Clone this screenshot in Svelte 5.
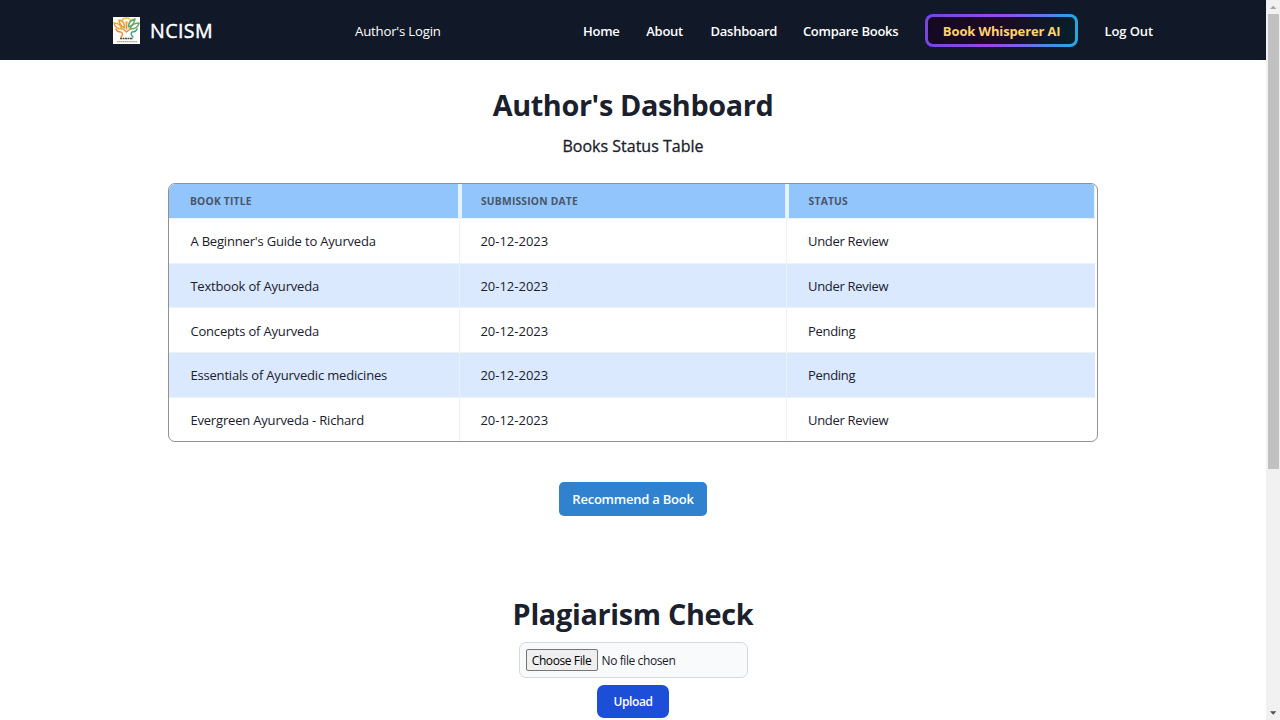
<script>
  const links = [
    { label: 'Home', width: 37 },
    { label: 'About', width: 38 },
    { label: 'Dashboard', width: 66 },
    { label: 'Compare Books', width: 96 }
  ];
  const books = [
    { title: "A Beginner's Guide to Ayurveda", date: '20-12-2023', status: 'Under Review' },
    { title: 'Textbook of Ayurveda', date: '20-12-2023', status: 'Under Review' },
    { title: 'Concepts of Ayurveda', date: '20-12-2023', status: 'Pending' },
    { title: 'Essentials of Ayurvedic medicines', date: '20-12-2023', status: 'Pending' },
    { title: 'Evergreen Ayurveda - Richard', date: '20-12-2023', status: 'Under Review' }
  ];
</script>

<div class="screen">
  <div class="page">
    <header>
      <div class="brand">
        <svg class="logo" viewBox="0 0 27 27" aria-hidden="true">
          <rect width="27" height="27" fill="#fbfcf5" />
          <g fill="none" stroke-width="1.5" stroke-linecap="round" stroke-linejoin="round">
            <path d="M8.5 4Q10 1 13.5 1Q17 1 18 4" stroke="#e8c84e" />
            <path d="M1 6Q7 6 9 12Q2 12 1 6ZM6 3Q12 4 11.5 11Q6 8 6 3Z" stroke="#e9a03c" />
            <path d="M26 6Q19 6 17 12Q25 12 26 6ZM22 2Q15 4 15.5 10Q21 8 22 2Z" stroke="#67a568" />
            <path d="M3 12Q4 15 8 15Q11 17 8 20" stroke="#e78c3c" />
            <path d="M24 12Q23 15 19 15Q17 17 20 20" stroke="#45a193" />
            <path d="M13.5 6V12M10 12L13.5 15L17 12" stroke="#d99542" />
          </g>
          <circle cx="13.5" cy="5.5" r="1.2" fill="#e4ae49" />
          <path d="M7 21.5H20" stroke="#544c42" stroke-width="1.3" stroke-dasharray="2 .5" />
          <path d="M4 24.7H24" stroke="#a6a8a1" stroke-width="1.2" stroke-dasharray="1.5 .4" />
        </svg>
        <span class="name">NCISM</span>
      </div>
      <span class="role">Author's Login</span>
      <nav>
        {#each links as link}
          <a style:width="{link.width}px" href="#top">{link.label}</a>
        {/each}
        <button class="whisper"><span>Book Whisperer AI</span></button>
        <a class="logout" href="#top">Log Out</a>
      </nav>
    </header>

    <main>
      <h1>Author's Dashboard</h1>
      <h2>Books Status Table</h2>
      <div class="table">
        <div class="row head">
          <div>BOOK TITLE</div>
          <div>SUBMISSION DATE</div>
          <div>STATUS</div>
        </div>
        {#each books as book}
          <div class="row">
            <div>{book.title}</div>
            <div class="date">{book.date}</div>
            <div class="status">{book.status}</div>
          </div>
        {/each}
      </div>
      <button class="recommend">Recommend a Book</button>
      <h1 class="check">Plagiarism Check</h1>
      <div class="file">
        <button>Choose File</button><span>No file chosen</span>
      </div>
      <button class="upload">Upload</button>
    </main>
  </div>
  <div class="scrollbar">
    <svg viewBox="0 0 14 14"><path d="M4 9L7.2 5.7L10.4 9Z" fill="#a3a3a3" /></svg>
    <div class="thumb"></div>
    <svg class="down" viewBox="0 0 14 14"><path d="M4 5.3H10.4L7.2 8.7Z" fill="#505050" /></svg>
  </div>
</div>

<style>
  :global(body) { margin: 0; overflow: hidden; background: #fff; }
  * { box-sizing: border-box; }
  .screen {
    display: flex; width: 1280px; height: 720px; overflow: hidden;
    font-family: "Open Sans", "Noto Sans", sans-serif; color: #1a202c; white-space: nowrap;
  }
  .page { width: 1266px; height: 720px; overflow: hidden; }
  button { font-family: inherit; padding: 0; white-space: nowrap; }
  header {
    height: 60px; background: #111827; color: #fff; display: flex; align-items: center;
    padding: 0 0 0 113px;
  }
  .brand { display: flex; align-items: center; flex: 0 0 242px; gap: 10px; }
  .logo { width: 27px; height: 27px; }
  .name { font-size: 19.6px; line-height: 28px; font-weight: 500; letter-spacing: .4px; padding-top: 1px; -webkit-text-stroke: .45px #fff; }
  .role { flex: 0 0 228px; font-size: 13.2px; letter-spacing: -.2px; line-height: 20px; padding-top: 1px; }
  nav { display: flex; align-items: center; gap: 26.3px; }
  nav a { flex: none; color: #fff; text-decoration: none; font-size: 13px; font-weight: 600; letter-spacing: -.27px; line-height: 20px; padding-top: 1px; }
  .logout { width: 50px; letter-spacing: -.1px; }
  .whisper {
    flex: none; width: 153px; height: 33px; border: 3px solid transparent; border-radius: 8px;
    background: linear-gradient(90deg, #150922, #1d0828 48%, #05202c) padding-box,
      linear-gradient(100deg, #7546dc, #9c47e5 48%, #2ca4df 94%) border-box;
    color: #ffd36b; font-size: 13px; font-weight: 700; letter-spacing: -.13px; line-height: 20px;
  }
  .whisper span { display: block; padding-top: 1px; }
  main { display: flex; flex-direction: column; align-items: center; }
  h1, h2 { margin: 0; }
  h1 { margin-top: 25px; font-size: 28.8px; line-height: 40px; font-weight: 700; letter-spacing: -.37px; }
  h2 { margin-top: 9px; font-size: 16px; line-height: 24px; font-weight: 500; letter-spacing: 0; -webkit-text-stroke: .3px #1a202c; }
  .table {
    margin-top: 25px; width: 930px; height: 259px; padding-right: 2px;
    border: 1px solid #929292; border-radius: 7px; overflow: hidden;
  }
  .row { display: grid; grid-template-columns: 291px 327px 1fr; height: 44.7px; font-size: 13px; letter-spacing: -.18px; }
  .row > div { display: flex; align-items: center; padding-left: 21.4px; padding-top: 1px; border-right: 1px solid #edf2f7; border-bottom: 1px solid #edf2f7; }
  .row > .date { padding-left: 20.4px; letter-spacing: 0; }
  .row > .status { padding-left: 21px; letter-spacing: -.3px; }
  .row > div:last-child { border-right: 0; }
  .row:nth-child(odd):not(.head) { background: #dbe9fe; }
  .row.head { grid-template-columns: 293px 327px 1fr; height: 35px; background: #93c5fd; font-size: 10.3px; font-weight: 700; color: #4a5568; letter-spacing: .2px; }
  .row.head > div { padding: 0 0 0 21px; }
  .row.head > div:not(:last-child) { border-right: 4px solid #e3f2fd; }
  .row.head > div:not(:first-child) { padding-left: 19px; }
  .row.head > div:last-child { border-right: 1px solid #e3f2fd; padding-left: 19.6px; }
  .recommend {
    margin-top: 40px; width: 148px; height: 34px; border: 0; border-radius: 5px;
    background: #3182ce; color: #fff; font-size: 13px; font-weight: 600; letter-spacing: -.23px;
  }
  .check { margin-top: 78px; letter-spacing: -.3px; }
  .file {
    margin-top: 8px; width: 229px; height: 36px; border: 1px solid #d5dae1; border-radius: 7px;
    background: #f8fafc; display: flex; align-items: center; padding: 0 6px; gap: 4px; font-size: 12px; letter-spacing: -.4px;
  }
  .file button {
    width: 72px; height: 22px; border: 1px solid #767676; border-radius: 2px; background: #efefef;
    color: #000; font-size: 12px; letter-spacing: -.4px;
  }
  .upload { margin-top: 7px; width: 72px; height: 33px; border: 0; border-radius: 7px; background: #1d4ed8; color: #fff; font-size: 12px; font-weight: 600; letter-spacing: -.4px; }
  .scrollbar { width: 14px; height: 720px; background: #f1f1f1; display: flex; flex-direction: column; }
  .scrollbar svg { display: block; width: 14px; height: 14px; }
  .thumb { height: 455px; margin: 0 1px 0 2px; background: #c1c1c1; }
  .scrollbar .down { margin-top: auto; }
</style>
